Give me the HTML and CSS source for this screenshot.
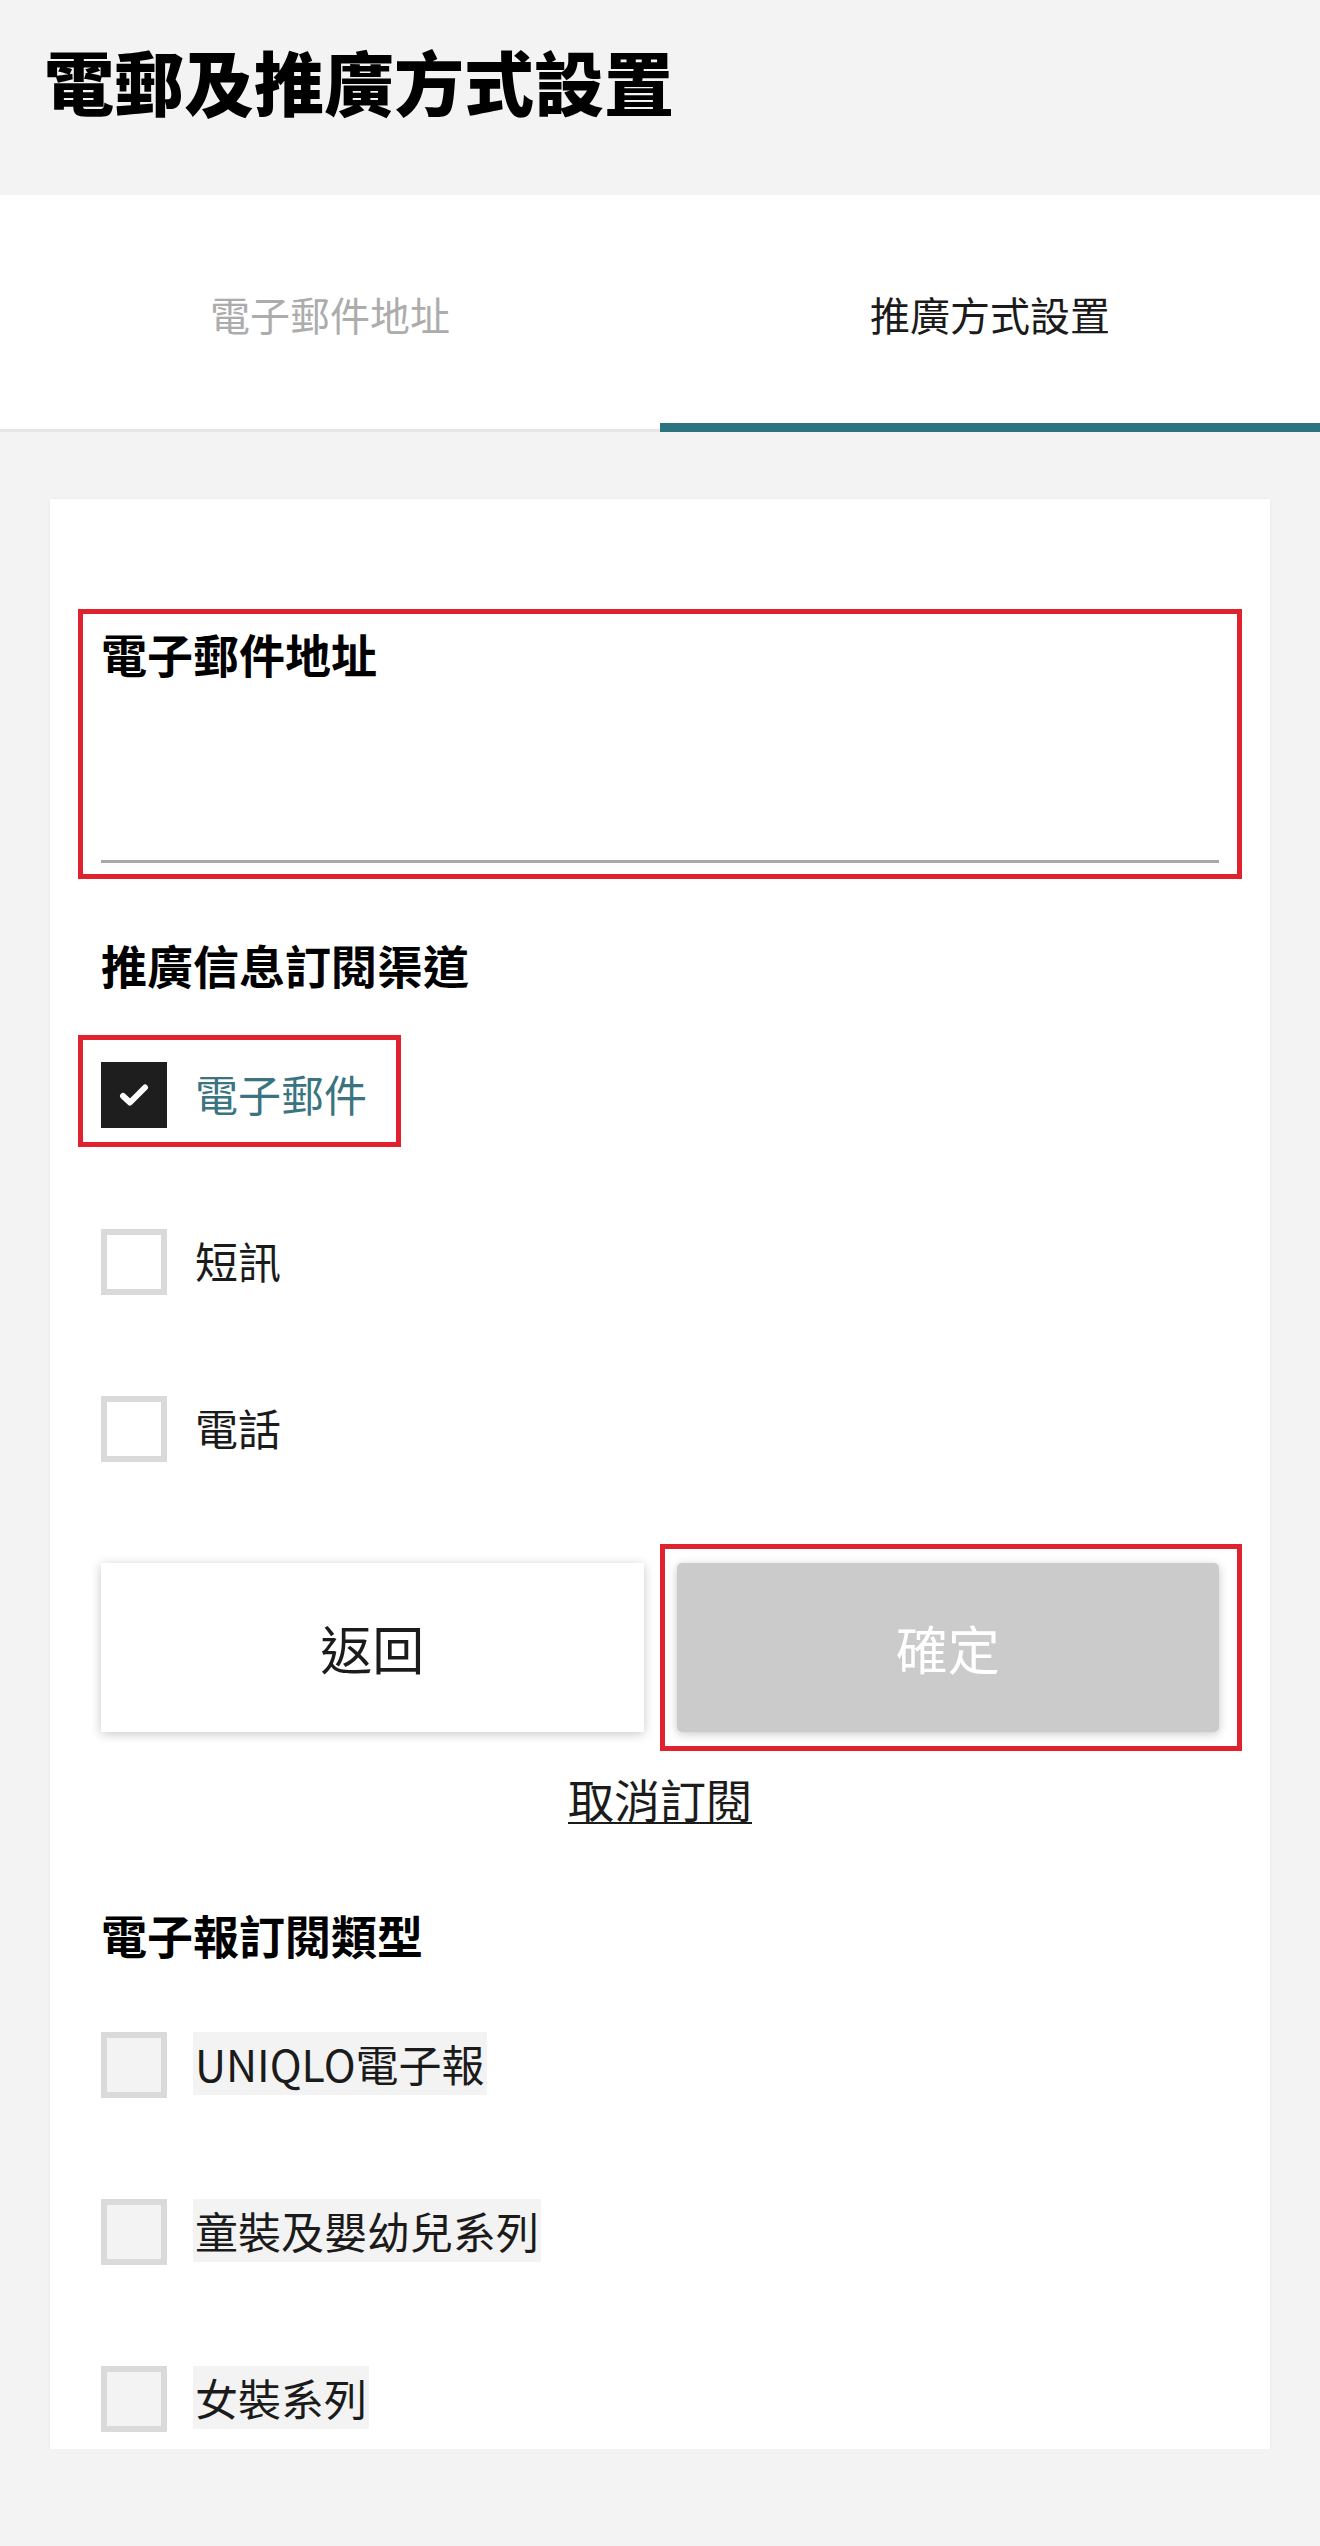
FILE: index.html
```html
<!DOCTYPE html>
<html lang="zh-Hant">
<head>
    <meta charset="UTF-8">
    <meta name="viewport" content="width=device-width, initial-scale=1.0">
    <title>電郵及推廣方式設置</title>
    <link rel="stylesheet" href="styles.css">
</head>
<body>

    <header class="page-head">
        <h1>電郵及推廣方式設置</h1>
    </header>

    <nav class="tabs">
        <a class="tab">電子郵件地址</a>
        <a class="tab tab-active">推廣方式設置</a>
    </nav>

    <main class="card">
        <div class="email-field mark">
            <label for="email">電子郵件地址</label>
            <input type="email" id="email">
        </div>

        <h2 class="section-title">推廣信息訂閱渠道</h2>
        <div class="options">
            <label class="option checked mark">
                <span class="box">
                    <svg viewBox="0 0 30 24" width="30" height="24"><path d="M4 13 L11 19.5 L26 4.5" fill="none" stroke="#fff" stroke-width="6" stroke-linecap="round" stroke-linejoin="round"/></svg>
                </span>
                <span class="text">電子郵件</span>
            </label>
            <label class="option">
                <span class="box"></span>
                <span class="text">短訊</span>
            </label>
            <label class="option">
                <span class="box"></span>
                <span class="text">電話</span>
            </label>
        </div>

        <div class="actions">
            <button class="btn btn-back">返回</button>
            <button class="btn btn-confirm mark">確定</button>
        </div>
        <a class="unsubscribe">取消訂閱</a>

        <h2 class="section-title title-news">電子報訂閱類型</h2>
        <div class="options options-news">
            <label class="option disabled">
                <span class="box"></span>
                <span class="text">UNIQLO電子報</span>
            </label>
            <label class="option disabled">
                <span class="box"></span>
                <span class="text">童裝及嬰幼兒系列</span>
            </label>
            <label class="option disabled">
                <span class="box"></span>
                <span class="text">女裝系列</span>
            </label>
        </div>
    </main>

</body>
</html>
```

FILE: styles.css
```css
body {
    margin: 0;
    background-color: #f3f3f3;
    color: #1b1b1b;
    font-family: "Noto Sans CJK TC", "Noto Sans", sans-serif;
}
.page-head {
    height: 195px;
    box-sizing: border-box;
    padding: 39px 0 0 44px;
}
.page-head h1 {
    margin: 0;
    font-size: 70px;
    line-height: 1.2;
    font-weight: 900;
    color: #000;
}
.tabs {
    display: flex;
    height: 237px;
    background-color: #fff;
    box-shadow: inset 0 -3px 0 #e6e6e6;
}
.tab {
    flex: 1;
    display: flex;
    align-items: center;
    justify-content: center;
    font-size: 40px;
    color: #acacac;
}
.tab-active {
    color: #1b1b1b;
    border-bottom: 9px solid #2b7381;
    padding-top: 9px;
}
.card {
    margin: 67px 50px 0;
    padding: 127px 51px 17px;
    background-color: #fff;
    box-shadow: 0 0 3px rgba(0, 0, 0, 0.06);
}
.mark {
    position: relative;
}
.mark::after {
    content: "";
    position: absolute;
    border: 5px solid #e0212e;
    pointer-events: none;
}
.email-field label {
    display: block;
    font-size: 46px;
    line-height: 1.2;
    font-weight: 700;
    color: #000;
}
.email-field input {
    display: block;
    width: 100%;
    height: 182px;
    box-sizing: border-box;
    border: none;
    border-bottom: 3px solid #a9a9a9;
    outline: none;
    background: transparent;
}
.email-field::after {
    top: -17px;
    bottom: -16px;
    left: -23px;
    right: -23px;
}
.section-title {
    margin: 74px 0 0;
    font-size: 46px;
    line-height: 1.2;
    font-weight: 700;
    color: #000;
}
.options {
    display: flex;
    flex-direction: column;
    align-items: flex-start;
    gap: 101px;
    margin-top: 70px;
}
.option {
    display: flex;
    align-items: flex-start;
    gap: 26px;
    font-size: 43px;
}
.box {
    width: 66px;
    height: 66px;
    box-sizing: border-box;
    border: 6px solid #dadada;
    background-color: #fff;
    display: flex;
    align-items: center;
    justify-content: center;
}
.option .text {
    line-height: 63px;
    padding: 0 2px;
}
.checked .box {
    border: none;
    background-color: #1e1e1e;
}
.checked .text {
    color: #3a7480;
}
.checked::after {
    top: -27px;
    bottom: -19px;
    left: -23px;
    right: -32px;
}
.disabled .box {
    background-color: #f3f3f3;
}
.disabled .text {
    background-color: #f3f3f3;
}
.actions {
    display: grid;
    grid-template-columns: 1fr 1fr;
    gap: 33px;
    margin-top: 101px;
}
.btn {
    height: 169px;
    border: none;
    font-family: inherit;
    font-size: 52px;
    box-shadow: 0 2px 10px rgba(0, 0, 0, 0.22);
}
.btn-back {
    background-color: #fff;
    color: #1b1b1b;
}
.btn-confirm {
    background-color: #cbcbcb;
    color: #fff;
    border-radius: 5px;
}
.btn-confirm::after {
    top: -19px;
    bottom: -19px;
    left: -17px;
    right: -23px;
}
.unsubscribe {
    display: block;
    margin-top: 39px;
    text-align: center;
    font-size: 46px;
    line-height: 1.2;
    text-decoration: underline;
    text-underline-offset: 4px;
    text-decoration-thickness: 2px;
}
.title-news {
    margin-top: 80px;
}
.options-news {
    margin-top: 70px;
}
```
